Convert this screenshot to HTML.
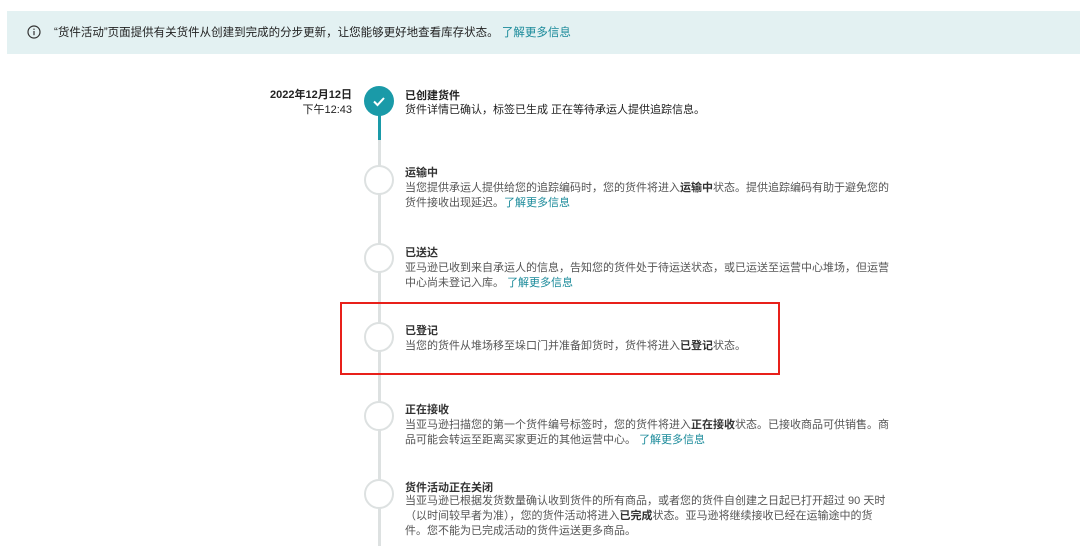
<!DOCTYPE html>
<html><head><meta charset="utf-8"><style>
body{margin:0;width:1080px;height:553px;background:#fff;position:relative;overflow:hidden;font-family:"Liberation Sans","Noto Sans CJK SC",sans-serif;}
.banner{position:absolute;left:7px;top:11px;width:1073px;height:43px;background:#e3f1f2;}
.banner .t{position:absolute;left:47px;top:13px;font-size:11.5px;color:#222;white-space:nowrap;}
a{color:#1a8a9a;text-decoration:none;}
.abs{position:absolute;white-space:nowrap;}
.ti{font-size:11px;font-weight:bold;color:#333;}
.de{font-size:11px;color:#555;line-height:15px;}
.de b{color:#333;}
.c{position:absolute;left:364px;width:26px;height:26px;border:2px solid #dde1e1;border-radius:50%;background:#fff;}
</style></head><body>
<div class="banner">
<svg style="position:absolute;left:20px;top:14px" width="14" height="14" viewBox="0 0 14 14"><circle cx="7" cy="7" r="6" fill="none" stroke="#333" stroke-width="1.2"/><rect x="6.4" y="6" width="1.2" height="4.2" fill="#333"/><rect x="6.4" y="3.6" width="1.2" height="1.3" fill="#333"/></svg>
<div class="t">“货件活动”页面提供有关货件从创建到完成的分步更新，让您能够更好地查看库存状态。 <a>了解更多信息</a></div>
</div>
<div class="abs" style="left:378px;top:116px;width:3px;height:430px;background:#dde1e1"></div>
<div class="abs" style="left:378px;top:112px;width:3px;height:28px;background:#1a9aa8"></div>
<div class="abs" style="left:364px;top:86px;width:30px;height:30px;border-radius:50%;background:#1a9aa8"></div>
<svg class="abs" style="left:370px;top:93px" width="18" height="16" viewBox="0 0 18 16"><path d="M4 8.5 L7.5 12 L14 5" fill="none" stroke="#fff" stroke-width="2"/></svg>
<div class="abs" style="left:230px;top:88px;width:122px;text-align:right;font-size:11px;line-height:15px;color:#222"><b>2022年12月12日</b><br>下午12:43</div>
<div class="abs ti" style="left:405px;top:87px;color:#222">已创建货件</div>
<div class="abs de" style="left:405px;top:103px;color:#222">货件详情已确认，标签已生成 正在等待承运人提供追踪信息。</div>

<div class="c" style="top:165px"></div>
<div class="abs ti" style="left:405px;top:164px">运输中</div>
<div class="abs de" style="left:405px;top:181px">当您提供承运人提供给您的追踪编码时，您的货件将进入<b>运输中</b>状态。提供追踪编码有助于避免您的<br>货件接收出现延迟。<a>了解更多信息</a></div>

<div class="c" style="top:243px"></div>
<div class="abs ti" style="left:405px;top:244px">已送达</div>
<div class="abs de" style="left:405px;top:261px">亚马逊已收到来自承运人的信息，告知您的货件处于待运送状态，或已运送至运营中心堆场，但运营<br>中心尚未登记入库。 <a>了解更多信息</a></div>

<div class="c" style="top:322px"></div>
<div class="abs ti" style="left:405px;top:322px">已登记</div>
<div class="abs de" style="left:405px;top:339px">当您的货件从堆场移至垛口门并准备卸货时，货件将进入<b>已登记</b>状态。</div>

<div class="abs" style="left:340px;top:302px;width:436px;height:69px;border:2px solid #e8201a"></div>

<div class="c" style="top:401px"></div>
<div class="abs ti" style="left:405px;top:401px">正在接收</div>
<div class="abs de" style="left:405px;top:418px">当亚马逊扫描您的第一个货件编号标签时，您的货件将进入<b>正在接收</b>状态。已接收商品可供销售。商<br>品可能会转运至距离买家更近的其他运营中心。 <a>了解更多信息</a></div>

<div class="c" style="top:479px"></div>
<div class="abs ti" style="left:405px;top:479px">货件活动正在关闭</div>
<div class="abs de" style="left:405px;top:494px">当亚马逊已根据发货数量确认收到货件的所有商品，或者您的货件自创建之日起已打开超过 90 天时<br>（以时间较早者为准），您的货件活动将进入<b>已完成</b>状态。亚马逊将继续接收已经在运输途中的货<br>件。您不能为已完成活动的货件运送更多商品。</div>
</body></html>
